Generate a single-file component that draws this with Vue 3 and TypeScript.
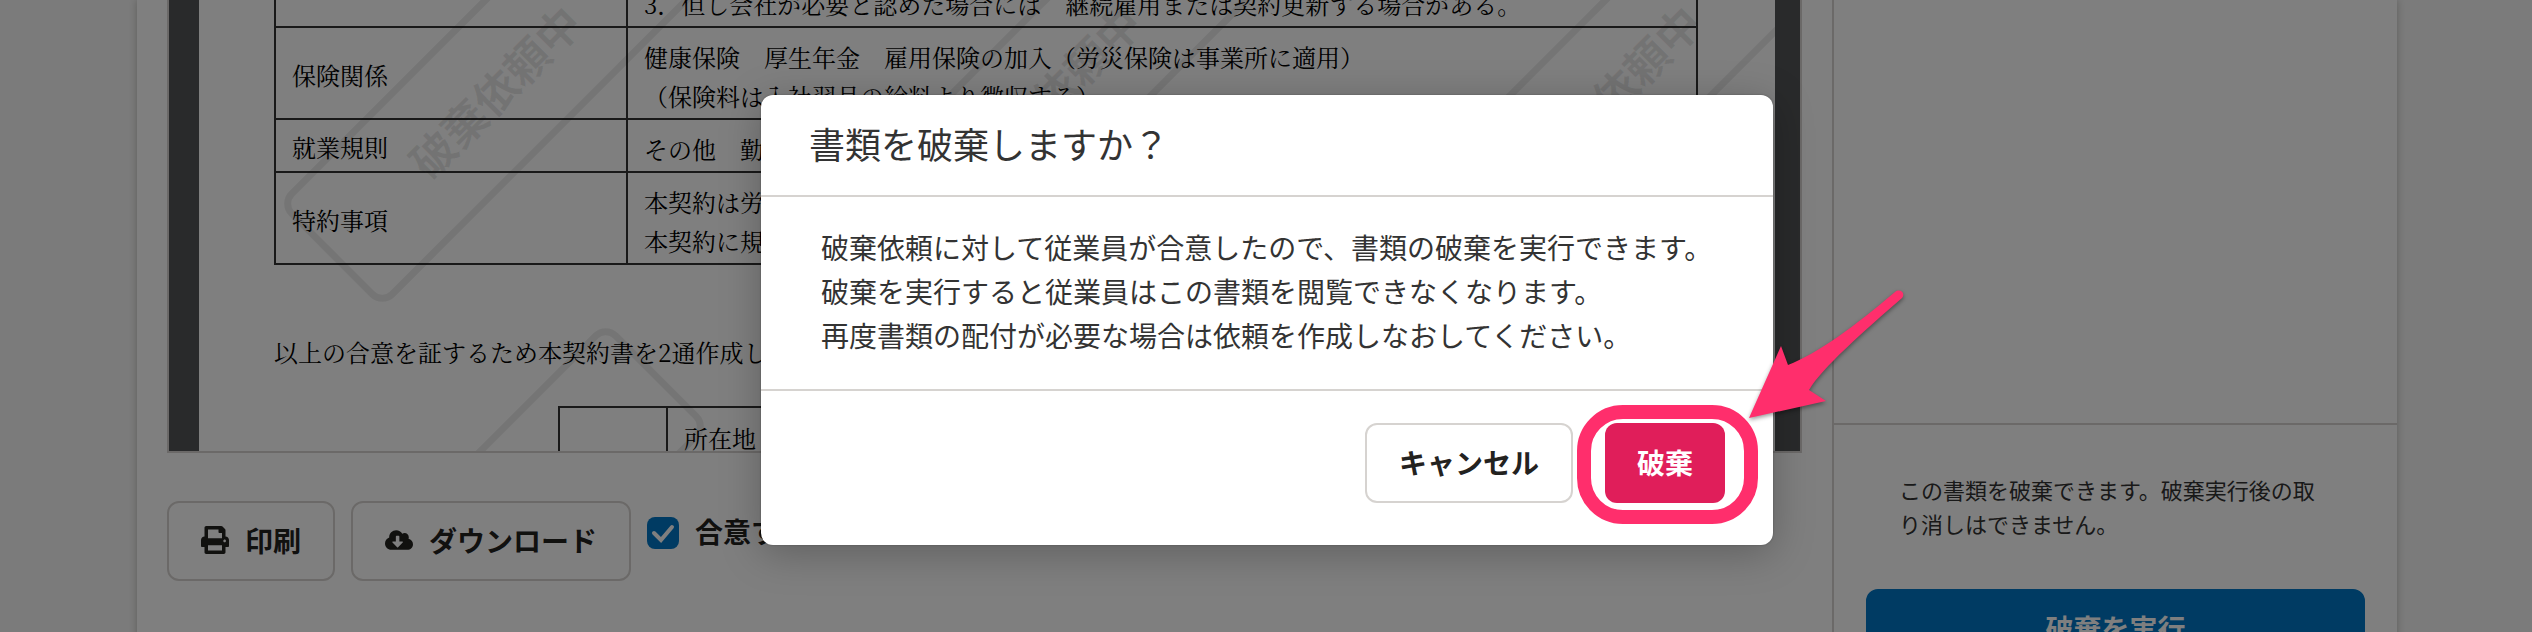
<script setup lang="ts">
import { ref } from 'vue'

interface ContractRow {
  heading: string
  lines: string[]
}

const contractRows: ContractRow[] = [
  { heading: '', lines: ['3．但し会社が必要と認めた場合には　継続雇用または契約更新する場合がある。'] },
  {
    heading: '保険関係',
    lines: [
      '健康保険　厚生年金　雇用保険の加入（労災保険は事業所に適用）',
      '（保険料は入社翌月の給料より徴収する）',
    ],
  },
  { heading: '就業規則', lines: ['その他　勤'] },
  { heading: '特約事項', lines: ['本契約は労', '本契約に規'] },
]

const messages: string[] = [
  '破棄依頼に対して従業員が合意したので、書類の破棄を実行できます。',
  '破棄を実行すると従業員はこの書類を閲覧できなくなります。',
  '再度書類の配付が必要な場合は依頼を作成しなおしてください。',
]

// Centres of the repeated watermark stamps on the sheet
const stamps = [0, 1, 2].flatMap((col) => [0, 1].map((row) => ({ x: 295 + col * 560, y: 92 + row * 446 })))

const agreed = ref(true)
</script>

<template>
  <div class="screen">
    <div class="card">
      <main class="main">
        <div class="viewer">
          <article class="sheet">
            <table class="contract">
              <tbody>
                <tr v-for="row in contractRows" :key="row.heading">
                  <th scope="row">{{ row.heading }}</th>
                  <td>
                    <div v-for="line in row.lines" :key="line">{{ line }}</div>
                  </td>
                </tr>
              </tbody>
            </table>
            <p class="closing">以上の合意を証するため本契約書を2通作成し</p>
            <table class="signature">
              <tbody>
                <tr>
                  <th></th>
                  <td>所在地</td>
                </tr>
              </tbody>
            </table>
            <svg class="watermark" aria-hidden="true">
              <g v-for="s in stamps" :key="`${s.x}-${s.y}`" :transform="`translate(${s.x} ${s.y}) rotate(-45)`">
                <rect x="-229" y="-71" width="458" height="142" rx="14" />
                <text x="1" y="18" text-anchor="middle">破棄依頼中</text>
              </g>
            </svg>
          </article>
        </div>
        <div class="controls">
          <button type="button" class="btn">
            <svg class="icon" viewBox="0 0 512 512" aria-hidden="true">
              <path
                d="M448 192V77.25c0-8.49-3.37-16.62-9.37-22.63L393.37 9.37c-6-6-14.14-9.37-22.63-9.37H96C78.33 0 64 14.33 64 32v160c-35.35 0-64 28.65-64 64v112c0 8.84 7.16 16 16 16h48v96c0 17.67 14.33 32 32 32h320c17.67 0 32-14.33 32-32v-96h48c8.84 0 16-7.16 16-16V256c0-35.35-28.65-64-64-64zm-64 256H128v-96h256v96zm0-224H128V64h192v48c0 8.84 7.16 16 16 16h48v96zm48 72c-13.25 0-24-10.75-24-24 0-13.26 10.75-24 24-24s24 10.74 24 24c0 13.25-10.75 24-24 24z"
              />
            </svg>
            印刷
          </button>
          <button type="button" class="btn">
            <svg class="icon" viewBox="0 0 640 512" aria-hidden="true">
              <path
                d="M537.6 226.6c4.1-10.7 6.4-22.4 6.4-34.6 0-53-43-96-96-96-19.7 0-38.1 6-53.3 16.2C367 64.2 315.3 32 256 32c-88.4 0-160 71.6-160 160 0 2.7.1 5.4.2 8.1C40.2 219.8 0 273.2 0 336c0 79.5 64.5 144 144 144h368c70.7 0 128-57.3 128-128 0-61.9-44-113.6-102.4-125.4zm-132.9 88.7L299.3 420.7c-6.2 6.2-16.4 6.2-22.6 0L171.3 315.3c-10.1-10.1-2.9-27.3 11.3-27.3H248V176c0-8.8 7.2-16 16-16h48c8.8 0 16 7.2 16 16v112h65.4c14.2 0 21.4 17.2 11.3 27.3z"
              />
            </svg>
            ダウンロード
          </button>
          <label class="agree">
            <span class="box">
              <input v-model="agreed" type="checkbox" />
              <svg v-if="agreed" class="tick" viewBox="0 0 32 32" aria-hidden="true">
                <path d="M7 16l7 7L25 10" />
              </svg>
            </span>
            合意す
          </label>
        </div>
      </main>
      <aside class="side">
        <div class="side-top"></div>
        <div class="side-action">
          <p>この書類を破棄できます。破棄実行後の取り消しはできません。</p>
          <button type="button" class="btn primary">破棄を実行</button>
        </div>
      </aside>
    </div>

    <div class="backdrop">
      <section class="dialog" role="dialog" aria-modal="true" aria-labelledby="dialog-title">
        <h2 id="dialog-title">書類を破棄しますか？</h2>
        <div class="dialog-body">
          <p v-for="message in messages" :key="message">{{ message }}</p>
        </div>
        <footer class="dialog-footer">
          <button type="button" class="btn">キャンセル</button>
          <div class="target">
            <button type="button" class="btn danger">破棄</button>
            <span class="ring"></span>
            <svg class="arrow" viewBox="0 0 160 136" aria-hidden="true">
              <path
                d="M4 132L36 60L43 79C72 68 110 40 150 6C155 2 161 7 157 12C119 45 77 82 64 104L81 115Z"
              />
            </svg>
          </div>
        </footer>
      </section>
    </div>
  </div>
</template>

<style>
body {
  margin: 0;
}
</style>

<style scoped>
.screen {
  position: relative;
  box-sizing: border-box;
  height: 100vh;
  overflow: hidden;
  padding: 0 135px 0 137px;
  background: #f7f7f7;
  color: #23221f;
  font-family: 'Noto Sans CJK JP', sans-serif;
  font-size: 28px;
}

p,
h2 {
  margin: 0;
  font-weight: 400;
}

.card {
  display: flex;
  min-height: 100%;
  background: #fff;
  box-shadow: 0 0 8px rgba(51, 51, 34, 0.3);
}

.main {
  flex: 1;
  min-width: 0;
  padding: 0 30px;
}

.viewer {
  height: 451px;
  overflow: hidden;
  padding: 0 25px 0 30px;
  border: 2px solid #d6d3d0;
  border-top: 0;
  background: #535557;
}

.sheet {
  position: relative;
  display: flow-root;
  height: 100%;
  overflow: hidden;
  padding: 0 77px 0 75px;
  background: #fff;
  color: #000;
  font-family: 'Noto Serif CJK JP', 'Noto Sans CJK JP', serif;
  font-size: 24px;
  font-weight: 400;
  line-height: 39px;
}

.contract {
  width: 100%;
  margin-top: -27px;
  border-collapse: collapse;
}

.contract th,
.contract td,
.signature th,
.signature td {
  padding: 9px 16px 3px;
  border: 2px solid #333;
  font-weight: 400;
  text-align: left;
}

.contract th {
  box-sizing: border-box;
  width: 352px;
  padding-top: 7px;
  padding-bottom: 5px;
}

.closing {
  margin: 67px 0 35px;
}

.signature {
  width: 1000px;
  margin-left: 284px;
  border-collapse: collapse;
}

.signature th {
  box-sizing: border-box;
  width: 108px;
}

.signature td {
  padding-top: 10px;
}

.watermark {
  position: absolute;
  inset: 0;
  width: 100%;
  height: 100%;
}

.watermark rect {
  fill: none;
  stroke: rgba(0, 0, 0, 0.08);
  stroke-width: 7px;
}

.watermark text {
  fill: rgba(0, 0, 0, 0.09);
  font-family: 'Noto Sans CJK JP', sans-serif;
  font-size: 44px;
  font-weight: 700;
}

.controls {
  display: flex;
  align-items: flex-start;
  gap: 16px;
  margin-top: 48px;
}

.btn {
  display: inline-flex;
  align-items: center;
  justify-content: center;
  gap: 16px;
  box-sizing: border-box;
  height: 80px;
  padding: 0 32px 2px;
  border: 2px solid #d6d3d0;
  border-radius: 12px;
  background: #fff;
  color: #23221f;
  font-family: inherit;
  font-size: 28px;
  font-weight: 700;
  line-height: 28px;
  white-space: nowrap;
}

.icon {
  width: 28px;
  height: 28px;
  fill: currentColor;
}

.agree {
  display: flex;
  align-items: flex-start;
  gap: 16px;
  padding-top: 16px;
  font-weight: 700;
  line-height: 28px;
}

.box {
  position: relative;
  display: flex;
}

.box input {
  appearance: none;
  width: 32px;
  height: 32px;
  margin: 0;
  border-radius: 8px;
  background: #fff;
}

.box input:checked {
  background: #0077c7;
}

.tick {
  position: absolute;
  inset: 0;
  fill: none;
  stroke: #fff;
  stroke-width: 4px;
  stroke-linecap: round;
  pointer-events: none;
}

.side {
  box-sizing: border-box;
  width: 565px;
  border-left: 2px solid #d6d3d0;
}

.side-top {
  height: 423px;
  border-bottom: 2px solid #d6d3d0;
}

.side-action {
  padding: 47px 32px;
}

.side-action p {
  padding: 0 33px;
  color: #333;
  font-size: 22px;
  line-height: 34px;
}

.btn.primary {
  width: 100%;
  margin-top: 49px;
  border-color: #0077c7;
  background: #0077c7;
  color: #fff;
}

.backdrop {
  position: absolute;
  inset: 0;
  display: flex;
  align-items: flex-start;
  justify-content: center;
  padding: 95px 0 0 2px;
  background: rgba(0, 0, 0, 0.5);
}

.dialog {
  width: 1012px;
  border-radius: 12px;
  background: #fff;
  box-shadow: 0 8px 40px rgba(0, 0, 0, 0.25), 0 0 2px rgba(0, 0, 0, 0.3);
  color: #333;
}

.dialog h2 {
  padding: 0 48px 4px;
  border-bottom: 2px solid #d6d3d0;
  font-size: 36px;
  line-height: 96px;
}

.dialog-body {
  padding: 28px 60px 32px;
  border-bottom: 2px solid #d6d3d0;
  line-height: 44px;
}

.dialog-footer {
  display: flex;
  justify-content: flex-end;
  gap: 32px;
  padding: 32px 48px 42px;
}

.target {
  position: relative;
  display: flex;
}

.btn.danger {
  border: 0;
  background: #e01e5a;
  color: #fff;
}

.ring {
  position: absolute;
  inset: -18px -33px -21px -28px;
  border: 14px solid #ff2e6c;
  border-radius: 46px;
  pointer-events: none;
}

.arrow {
  position: absolute;
  left: 140px;
  bottom: 81px;
  width: 160px;
  height: 136px;
  overflow: visible;
  fill: #ff2e6c;
  filter: drop-shadow(0 2px 2px rgba(0, 0, 0, 0.4));
  pointer-events: none;
}
</style>
